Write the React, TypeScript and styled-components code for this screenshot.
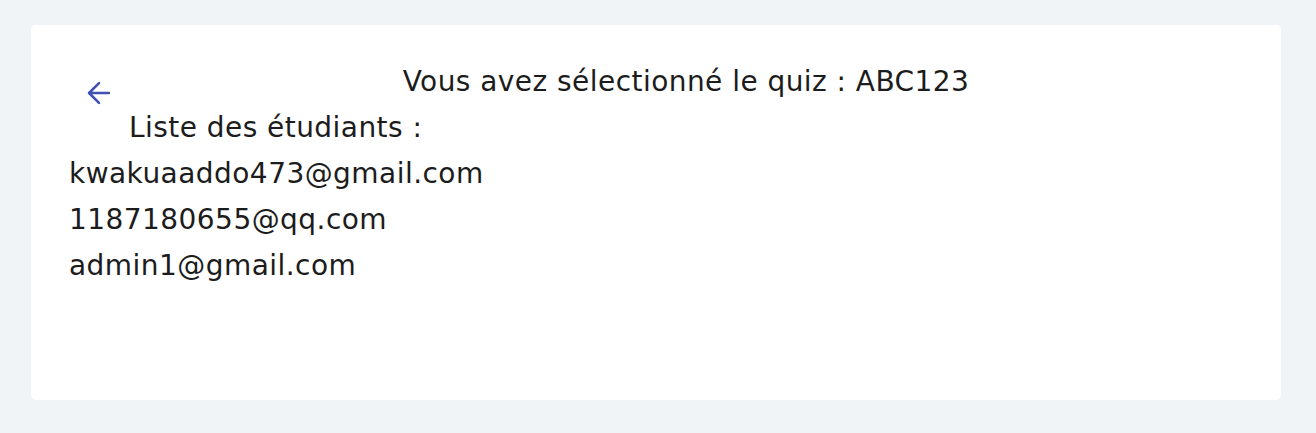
import React from "react";
import styled, { createGlobalStyle } from "styled-components";
import { ArrowLeft } from "lucide-react";

const GlobalStyle = createGlobalStyle`
  html, body {
    margin: 0;
    padding: 0;
    background: #f0f4f7;
  }
  body {
    font-family: "DejaVu Sans", "Noto Sans", sans-serif;
    color: #1c1c1c;
  }
`;

const Page = styled.div`
  padding: 25px 35px 33px 31px;
  min-height: 433px;
  box-sizing: border-box;
`;

const Card = styled.section`
  background: #ffffff;
  border-radius: 5px;
  height: 375px;
  box-sizing: border-box;
  padding: 35px 38px;
  display: flex;
  flex-direction: column;
`;

const Header = styled.div`
  display: flex;
  align-items: flex-start;
`;

const BackButton = styled.button`
  width: 60px;
  height: 40px;
  margin-top: 13px;
  padding: 0;
  border: none;
  background: transparent;
  color: #3f51b5;
  display: flex;
  align-items: center;
  justify-content: center;
  cursor: pointer;
  flex-shrink: 0;
`;

const HeaderText = styled.div`
  flex: 1;
  display: flex;
  flex-direction: column;
`;

const Line = styled.p<{ $lh: number; $center?: boolean }>`
  margin: 0;
  font-size: 28px;
  letter-spacing: 0.45px;
  line-height: ${(p) => p.$lh}px;
  text-align: ${(p) => (p.$center ? "center" : "left")};
  font-weight: 400;
`;

const List = styled.div`
  display: flex;
  flex-direction: column;
`;

const students = [
  "kwakuaaddo473@gmail.com",
  "1187180655@qq.com",
  "admin1@gmail.com",
];

export default function App() {
  return (
    <>
      <GlobalStyle />
      <Page>
        <Card>
          <Header>
            <BackButton aria-label="Retour">
              <ArrowLeft size={34} strokeWidth={1.8} />
            </BackButton>
            <HeaderText>
              <Line $lh={44} $center>
                Vous avez sélectionné le quiz : ABC123
              </Line>
              <Line $lh={47}>Liste des étudiants :</Line>
            </HeaderText>
          </Header>
          <List>
            {students.map((s) => (
              <Line key={s} $lh={46}>
                {s}
              </Line>
            ))}
          </List>
        </Card>
      </Page>
    </>
  );
}
